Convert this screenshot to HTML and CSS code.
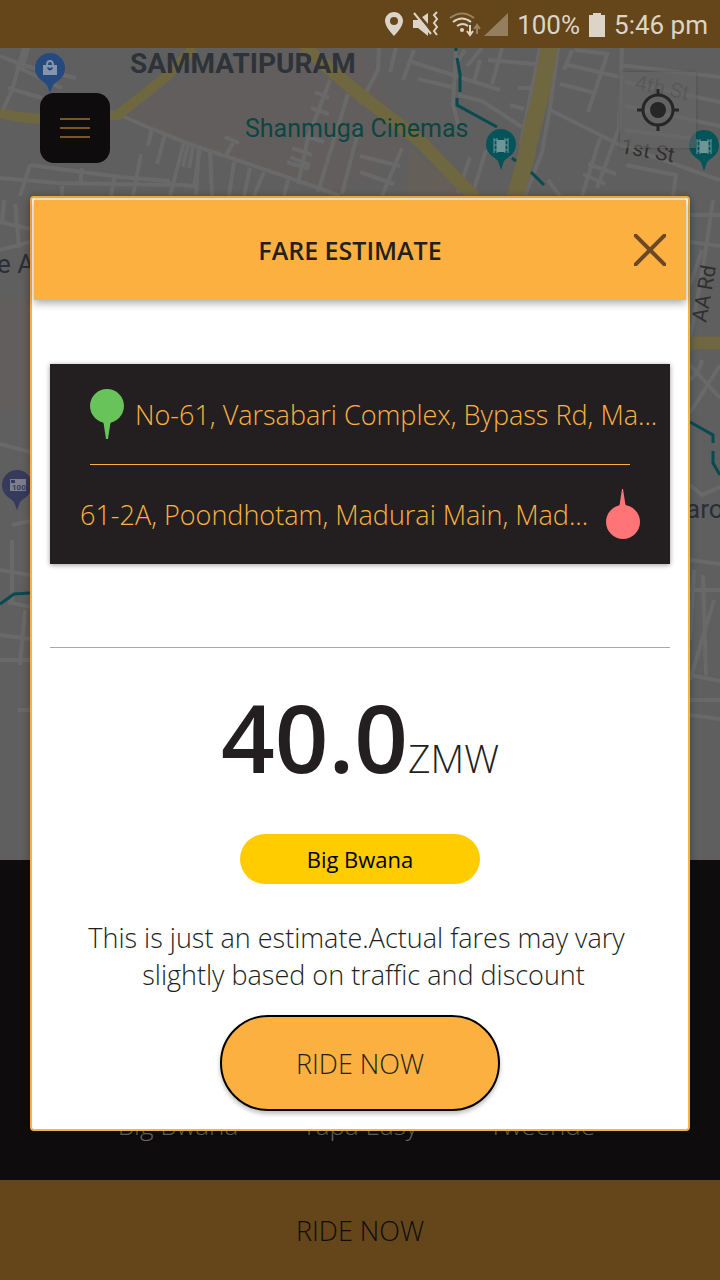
FILE: index.html
```html
<!DOCTYPE html>
<html lang="en">
<head>
<meta charset="utf-8">
<meta name="viewport" content="width=device-width, initial-scale=1">
<title>Fare estimate</title>
<link rel="stylesheet" href="styles.css">
</head>
<body>
<div class="app">
  <header class="status">
    <svg class="status-icons" width="126" height="32" viewBox="382 8 126 32" aria-hidden="true">
      <path fill="#ddd4c8" fill-rule="evenodd" d="M394 12c-5 0-9 4-9 9 0 6 9 15 9 15s9-9 9-15c0-5-4-9-9-9zm0 5a4 4 0 1 1 0 8 4 4 0 0 1 0-8z"/>
      <path fill="#ddd4c8" d="M413 20h5l10-7v23l-10-8h-5z"/>
      <path stroke="#64461a" stroke-width="3" d="M415 11l17 20"/>
      <path stroke="#ddd4c8" stroke-width="2" d="M414 13l17 21"/>
      <path fill="none" stroke="#ddd4c8" stroke-width="2" d="M437 12l-3 3 3 4-3 4 3 4-3 4 3 4"/>
      <g fill="none" stroke="#ddd4c8" stroke-width="2">
        <path stroke="#9b835f" d="M450 18q12-9 24 0"/>
        <path d="M453 22q9-7 18 0M457 26q6-4 11 0"/>
        <path d="M470 25v9m-3-3l3 4 3-4"/>
        <path stroke="#9b835f" d="M477 34v-8m-3 3l3-4 3 4"/>
      </g>
      <circle cx="462" cy="30" r="2" fill="#ddd4c8"/>
      <path fill="#957e5d" d="M508 13v23h-24z"/>
    </svg>
    <span>100%</span>
    <svg class="battery" width="16" height="24" viewBox="0 0 16 24" aria-hidden="true"><path fill="#ddd4c8" d="M4 0h8v2h4v22H0V2h4z"/></svg>
    <time>5:46 pm</time>
  </header>

  <main class="map">
    <svg class="map-art" viewBox="0 48 720 812" preserveAspectRatio="xMidYMin slice" role="img" aria-label="Map of Sammatipuram">
      <path fill="#5f5f5f" d="M0 48h720v812H0z"/>
      <path fill="#625e5e" d="M180 80l90-32h90l50 100-70 48-120-40-100-40zM0 300h40v110H0z"/>
      <path fill="#646059" d="M410 148l60 48h-65z"/>
      <g class="roads">
        <path d="M24 48L12 90 2 112M28 48l-5 18M0 56l26 10 50 12M8 88l34 10M16 66l28 14 18 8"/>
        <path d="M122 116l28 12 42 17 54 18 64 22 30 11"/>
        <path d="M152 128l-4 18M165 134l-8 30M184 142l-14 54M199 145l-3 50M210 150l2 46M234 162l-5 34M250 168l-6 28M264 172l-10 24M288 180l-4 16M188 144l-5 23M193 146l-4 22"/>
        <path d="M0 178l58 5 112 2M30 165l-10 31M30 165l90 12 50 4M82 168l-2 18M115 174l-4 22M141 154l-8 42M62 186v10M170 184l24 2 6-38"/>
        <path d="M330 80l-22 58-10 46M348 94l-30 98M360 124l-18 70M315 92l14 6M311 108l18 6M306 136l18 6M292 148l20 7M290 157l20 8M287 162l22 7M225 137l14 6M233 143l-8 14"/>
        <path d="M379 48l-1 22-18 34M396 48l-6 24M414 50l-11 30M412 62l88 28M418 79l34 8M456 50l-3 54 6 24M465 50l-8 12M482 48l-15 18M502 48l-10 36M480 60l-6 22M488 60l48 4"/>
        <path d="M458 95l24 6 40 26M510 105l14 4M518 88h20M540 48l-12 60-7 36M558 48l-8 60-8 44-17 44"/>
        <path d="M572 50l-8 20M575 50l34 4M564 64l60 14M560 84l35 9M608 52l-20 60M622 48l-3 80-22 60M550 110l70 35 100 35M620 65l100 12M625 82l95 20M625 106l95 20M625 130l95 12"/>
        <path d="M626 165l50 10-3 21M588 164l28 10M583 174l22 10M600 138l-18 58M360 156l40 10M360 172l34 12M402 148l-20 48M486 150l-8 26-6 20M548 180l12 16M470 157l-12 36"/>
        <path d="M0 222l30 7M0 250l30-8M4 200l-2 24M15 204l4 44M0 444l30 8M12 540v65M0 570l30 5M12 525l18-4M8 602l22 5M25 610l-5 55M0 635l30 4M0 660h30M18 710h12"/>
        <path d="M690 215h30M690 242l30 4M713 200l-10 68-13 70M690 285l12-35M690 365l30 33M690 380q10-10 12-20M720 365l-30 48M690 485l12 10 18-8M690 560l30 4M694 570l-4 70M703 575l3 100M690 590h30M714 600l-24 80M690 675l30 6M690 700h30M690 715l30 4"/>
      </g>
      <g class="highways">
        <path d="M0 113q35 8 60 5t58-3l48-38 28-29"/>
        <path d="M303 46q22 19 50 43l67 52 55 57" stroke-width="13"/>
        <path d="M549 46q-4 34-12 64t-10 44l-12 44" class="wide"/>
        <path d="M688 343h32" stroke-width="13"/>
      </g>
      <g fill="none" stroke="#074a4f" stroke-width="3">
        <path d="M456 48v3M457 58l3 16v18M457 98v7l40 22M512 158l4 3M531 172l13 13M0 604l14-10 16-1M690 422l23 13v8m0 8v12l7 12"/>
      </g>
      <g fill="#04545a">
        <circle cx="501" cy="144" r="15"/><path d="M489 153h24l-9 8-3 9-3-9z"/>
        <circle cx="704" cy="145" r="15"/><path d="M692 154h24l-9 8-3 9-3-9z"/>
      </g>
      <g id="film">
        <path fill="#6f9696" d="M497 140h8v12h-8z"/>
        <path fill="none" stroke="#6f9696" d="M494 138v15M497 138v15M505 138v15M508 138v15M494 140h3M494 145h3M494 150h3M505 140h3M505 145h3M505 150h3"/>
      </g>
      <use href="#film" x="203" y="1"/>
      <g fill="#244a7f"><circle cx="50" cy="68" r="15"/><path d="M38 77h24l-9 8-3 8-3-8z"/></g>
      <path fill="#8795ab" fill-rule="evenodd" d="M43 65h3q0-5 4-5t4 5h3v10H43zm5 0h4q0-3-2-3t-2 3zm-1 3q3 5 6 0l-1-1q-2 2-4 0z"/>
      <g fill="#363a5c"><circle cx="17" cy="485" r="15"/><path d="M5 494h24l-9 8-3 8-3-8z"/></g>
      <path fill="#7c7e8b" d="M10 479h16v12H10z"/>
      <path fill="#363a5c" d="M11 480h4v3h-4z"/>
      <text class="film-label" x="12" y="490">100</text>
      <text class="district" x="130" y="73">SAMMATIPURAM</text>
      <text class="cinema" x="245" y="137">Shanmuga Cinemas</text>
      <text class="street faint" transform="translate(634 89) rotate(12)">4th St</text>
      <text class="street" transform="translate(620 153) rotate(10)">1st St</text>
      <text class="street" transform="translate(706 323) rotate(-80)">AA Rd</text>
      <text class="place" x="-3" y="273">e A</text>
      <text class="place" x="686" y="518">aro</text>
    </svg>
    <button class="menu" type="button" aria-label="Menu">
      <svg width="30" height="24" viewBox="0 0 30 24"><path stroke="#7b5724" stroke-width="2" d="M0 3h30M0 12h30M0 21h30"/></svg>
    </button>
    <button class="locate" type="button" aria-label="My location">
      <svg width="42" height="42" viewBox="0 0 42 42" fill="none" stroke="#262626"><circle cx="21" cy="21" r="15" stroke-width="3"/><path stroke-width="3" d="M21 0v7M21 35v7M0 21h7M35 21h7"/><circle cx="21" cy="21" r="8" fill="#262626" stroke="none"/></svg>
    </button>
  </main>

  <section class="services" aria-label="Vehicle types">
    <span>Big Bwana</span><span>Tapa Easy</span><span>Tweende</span>
  </section>
  <button class="book" type="button">RIDE NOW</button>

  <div class="overlay">
    <section class="dialog" role="dialog" aria-labelledby="fare-title">
      <header class="dialog-head">
        <h1 id="fare-title">FARE ESTIMATE</h1>
        <button class="close" type="button" aria-label="Close">
          <svg width="32" height="32" viewBox="0 0 32 32"><path stroke="#6b4826" stroke-width="4" d="M0 0l32 32M32 0L0 32"/></svg>
        </button>
      </header>
      <div class="dialog-body">
        <div class="route">
          <div class="stop from">
            <svg width="34" height="50" viewBox="0 0 34 50" fill="#68c35a" aria-hidden="true"><circle cx="17" cy="17" r="17"/><path d="M11 31q3 2 3 6l2 13h2l2-13q0-4 3-6z"/></svg>
            <span>No-61, Varsabari Complex, Bypass Rd, Ma...</span>
          </div>
          <div class="stop to">
            <span>61-2A, Poondhotam, Madurai Main, Mad...</span>
            <svg width="34" height="50" viewBox="0 0 34 50" fill="#ff7476" aria-hidden="true"><circle cx="17" cy="33" r="17"/><path d="M11 19q3-2 3-6l2-13h1l2 13q0 4 4 6z"/></svg>
          </div>
        </div>
        <hr class="rule">
        <p class="price"><strong>40.0</strong><span>ZMW</span></p>
        <p class="tier">Big Bwana</p>
        <p class="note">This is just an estimate.Actual fares may vary&nbsp;<br>&nbsp;slightly based on traffic and discount</p>
        <button class="ride" type="button">RIDE NOW</button>
      </div>
    </section>
  </div>
</div>
</body>
</html>
```
FILE: styles.css
```css
* { box-sizing: border-box; }
body, h1, p { margin: 0; }
body {
  font-family: "Open Sans", "Noto Sans", sans-serif;
  font-weight: 300;
  color: #231f20;
  background: #0e0c0d;
}
button { border: 0; padding: 0; font: inherit; color: inherit; cursor: pointer; }
svg { display: block; flex: none; }

.app {
  position: relative;
  display: flex;
  flex-direction: column;
  min-height: 100vh;
}
.status {
  display: flex;
  align-items: center;
  justify-content: flex-end;
  height: 48px;
  padding: 2px 12px 0 0;
  gap: 9px;
  background: #64461a;
  color: #ddd4c8;
  font: 400 26px/32px Roboto, sans-serif;
}
.status-icons { margin-top: -2px; }

.map {
  position: relative;
  flex: 1;
  display: flex;
  justify-content: space-between;
  align-items: flex-start;
  padding: 24px 24px 0 40px;
  overflow: hidden;
}
.map-art { position: absolute; inset: 0; width: 100%; height: 100%; }
.roads { fill: none; stroke: #696969; stroke-width: 4; }
.highways { fill: none; stroke: #6f6740; stroke-width: 10; }
.highways .wide { stroke-width: 17; }
.map-art text { font-family: Roboto, sans-serif; }
.map-art .district { font-size: 28px; font-weight: 700; fill: #2d3339; }
.map-art .cinema { font-size: 25px; font-weight: 400; fill: #0c4643; }
.map-art .street { font-size: 21px; font-weight: 400; fill: #303030; }
.map-art .faint { fill: #484848; }
.map-art .place { font-size: 26px; font-weight: 400; fill: #2b2e38; }
.map-art .film-label { font-size: 8px; font-weight: 700; fill: #363a5c; }
.menu, .locate { position: relative; display: grid; place-items: center; }
.menu { width: 70px; height: 70px; margin-top: 21px; border-radius: 14px; background: #0e0c0d; }
.locate {
  width: 76px;
  height: 76px;
  background: rgb(102 102 102 / 60%);
  box-shadow: 0 0 3px rgb(0 0 0 / 20%);
}

.services {
  display: grid;
  grid-template-columns: repeat(3, 1fr);
  align-items: end;
  height: 320px;
  padding: 0 87px 37px;
  background: #0e0c0d;
  color: #6c696a;
  font-size: 26px;
  line-height: 36px;
  text-align: center;
}
.book { height: 100px; background: #64461a; color: #0e0c0d; font-size: 27px; }

.overlay { position: absolute; inset: 0; padding: 196px 30px 40px; }
.dialog {
  border: 2px solid #fbb040;
  border-radius: 4px;
  background: #fff;
  box-shadow: 0 2px 8px rgb(0 0 0 / 30%);
}
.dialog-head {
  display: grid;
  grid-template-columns: 1fr auto 1fr;
  align-items: center;
  height: 102px;
  margin: 0 2px;
  padding: 0 20px 0 0;
  border-top: 2px solid #eadbc5;
  background: #fbb040;
  box-shadow: 0 3px 8px rgb(0 0 0 / 35%);
}
.dialog-head h1 { grid-column: 2; font-size: 25px; font-weight: 600; }
.close { justify-self: end; background: none; }
.dialog-body {
  display: flex;
  flex-direction: column;
  align-items: center;
  padding: 64px 18px 18px;
}
.route {
  align-self: stretch;
  background: #231f20;
  color: #fbb040;
  font-size: 27px;
  box-shadow: 0 1px 5px rgb(0 0 0 / 40%);
}
.stop { display: flex; align-items: center; height: 100px; white-space: nowrap; }
.stop span { flex: 1; }
.from { gap: 11px; padding: 0 10px 0 40px; }
.to { position: relative; gap: 16px; padding: 0 30px; }
.to::before { content: ""; position: absolute; top: 0; left: 40px; right: 40px; border-top: 1px solid #fbb040; }
.rule { align-self: stretch; margin: 83px 0 0; border: 0; border-top: 1px solid #aaa; }
.price { display: flex; align-items: baseline; margin-top: 34px; line-height: 110px; }
.price strong { font-size: 94px; font-weight: 600; }
.price span { font-size: 39px; }
.tier {
  width: 240px;
  margin-top: 21px;
  border-radius: 25px;
  background: #fc0;
  color: #000;
  font-size: 22px;
  font-weight: 400;
  line-height: 50px;
  text-align: center;
}
.note { margin-top: 35px; font-size: 27px; line-height: 37px; text-align: center; }
.ride {
  width: 280px;
  height: 96px;
  margin-top: 22px;
  border: 2px solid #000;
  border-radius: 48px;
  background: #fbb040;
  font-size: 27px;
  box-shadow: 0 3px 4px rgb(0 0 0 / 25%);
}
```
